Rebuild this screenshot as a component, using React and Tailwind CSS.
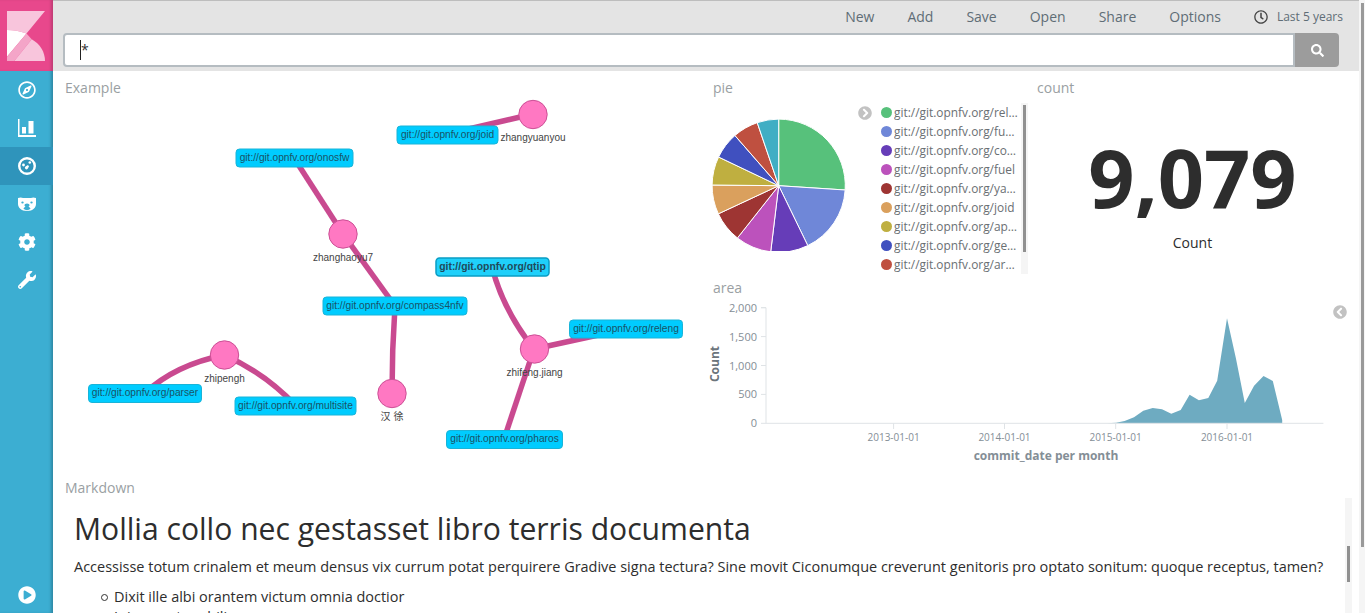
import React from 'react';
import {
  FaRegCompass, FaCog, FaWrench, FaPlayCircle, FaRegClock, FaSearch,
  FaChevronCircleRight, FaChevronCircleLeft,
} from 'react-icons/fa';

const menu = ['New', 'Add', 'Save', 'Open', 'Share', 'Options'];

const legend = [
  ['releng', '#57c17b'],
  ['functest', '#6f87d8'],
  ['compass4nfv', '#663db8'],
  ['fuel', '#bc52bc'],
  ['yardstick', '#9e3533'],
  ['joid', '#daa05d'],
  ['apex', '#bfaf40'],
  ['genesis', '#4050bf'],
  ['armband', '#bf5040'],
];

// clockwise from 12 o'clock, degrees
const slices = [
  [0, 93.7, '#57c17b'],
  [93.7, 154.1, '#6f87d8'],
  [154.1, 186.9, '#663db8'],
  [186.9, 218.3, '#bc52bc'],
  [218.3, 245, '#9e3533'],
  [245, 270.6, '#daa05d'],
  [270.6, 295.5, '#bfaf40'],
  [295.5, 318.9, '#4050bf'],
  [318.9, 341.2, '#bf5040'],
  [341.2, 360, '#40aec4'],
];

const slicePath = (a, b) => {
  const cx = 778.7, cy = 185.7, r = 66.6;
  const pt = (d) => {
    const t = (d * Math.PI) / 180;
    return `${(cx + r * Math.sin(t)).toFixed(2)} ${(cy - r * Math.cos(t)).toFixed(2)}`;
  };
  return `M${cx} ${cy}L${pt(a)}A${r} ${r} 0 ${b - a > 180 ? 1 : 0} 1 ${pt(b)}Z`;
};

const edges = [
  'M533 114L447 134',
  'M294 158L343 234',
  'M343 234L395 306',
  'M395 306Q392 350 392 393',
  'M492 267Q503 310 534 349',
  'M534 349L626 329',
  'M534 349L504 439',
  'M224 355Q175 365 145 393',
  'M224 355Q265 373 296 406',
];

const people = [
  ['zhangyuanyou', 533, 114.5, 141],
  ['zhanghaoyu7', 343, 234, 261],
  ['zhipengh', 224.5, 355, 382],
  ['汉 徐', 392, 393.5, 420],
  ['zhifeng.jiang', 534.5, 349, 376],
];

const repos = [
  ['joid', 397, 126, 101, 18],
  ['onosfw', 236, 149, 117, 18],
  ['compass4nfv', 323, 297, 144, 18],
  ['releng', 569.5, 320, 113, 18],
  ['parser', 88.5, 384.5, 113, 18],
  ['multisite', 235, 397, 121, 18],
  ['pharos', 446.5, 430.5, 116, 18],
];

const areaLine = 'M1106.8 423.3L1116.1 422.7L1124.6 421L1134 417.3L1143.3 410.7L1152.7 408L1162 409.3L1171.3 413.7L1180.7 410L1189.6 394.7L1198.9 400.3L1208.3 398L1217.2 380.7L1227 318.3L1235.9 358.3L1244.8 403L1254.1 385.7L1263.5 376L1272.8 381L1282.2 420L1282.2 423.3Z';

const yTicks = [['2,000', 307.7], ['1,500', 336.6], ['1,000', 365.5], ['500', 394.4], ['0', 423.3]];
const xTicks = [['2013-01-01', 893.6], ['2014-01-01', 1004.5], ['2015-01-01', 1115.7], ['2016-01-01', 1227]];

const ChartIcon = () => (
  <svg width="18" height="18" viewBox="0 0 18 18" fill="#fff">
    <path d="M0 0h1.500v16H18v2H0z" />
    <path d="M4 8h4v6.500H4zM10.500 2h5v12.500h-5z" />
  </svg>
);

const GaugeIcon = () => (
  <svg width="18" height="18" viewBox="0 0 18 18">
    <circle cx="9" cy="9" r="7.800" fill="none" stroke="#fff" strokeWidth="2.400" />
    <circle cx="5.500" cy="8" r="1.400" fill="#fff" />
    <circle cx="11.800" cy="5.500" r="1.300" fill="#fff" />
    <path d="M7.500 9.500l2.500-1.500 1 1.500-1.500 2.500a1.500 1.500 0 1 1-2-2.500z" fill="#fff" />
  </svg>
);

const BearIcon = () => (
  <svg width="18" height="14" viewBox="0 0 18 16" preserveAspectRatio="none" fill="#fff">
    <path fillRule="evenodd" d="M0 1.200C2 .2 3.500.2 5 1.200h8C14.500.2 16 .2 18 1.200V8c0 4-3 8-9 8S0 12 0 8zM4.500 5a1.200 1.200 0 1 0 0 2.400 1.200 1.200 0 0 0 0-2.400zm9 0a1.200 1.200 0 1 0 0 2.400 1.200 1.200 0 0 0 0-2.400zM9 7.500c-1.500 0-2.500 1-2.500 2 0 .8.500 1.300 1 1.600-1 .5-1.800 1.300-2 2.400C6.500 14.500 7.700 15 9 15s2.500-.5 3.500-1.500c-.2-1.100-1-1.900-2-2.400.5-.3 1-.8 1-1.600 0-1-1-2-2.500-2z" />
  </svg>
);

const Logo = () => (
  <svg width="38" height="50" viewBox="7 11 38 50">
    <path d="M7 11H45L26.500 33.500C20 31 13 30 7 30Z" fill="#f8c5dc" />
    <path d="M7 30C13 30 20 31 26.500 33.500L7 56.700Z" fill="#fff" />
    <path d="M26.500 33.500C28.500 35.500 30 37.500 31.700 39.300L14.300 61H7V56.700Z" fill="#f4a5c8" />
    <path d="M31.700 39.300C40 44 45 52 45 61H14.300Z" fill="#f8c5dc" />
  </svg>
);

const NavItem = ({ active, children }) => (
  <div className={`flex h-[38px] items-center justify-center ${active ? 'bg-[#2f94bb]' : ''}`}>
    {children}
  </div>
);

const Sidebar = () => (
  <div className="flex w-[53px] shrink-0 flex-col bg-[#3caed2] shadow-[inset_-3px_0_3px_-1px_rgba(0,0,0,0.22)]">
    <div className="flex h-[71px] items-center justify-center bg-[#e8488c] pr-[1px] shadow-[inset_-3px_0_3px_-1px_rgba(0,0,0,0.18)]">
      <Logo />
    </div>
    <NavItem><FaRegCompass className="text-white" size={18} /></NavItem>
    <NavItem><ChartIcon /></NavItem>
    <NavItem active><GaugeIcon /></NavItem>
    <NavItem><BearIcon /></NavItem>
    <NavItem><FaCog className="text-white" size={18} /></NavItem>
    <NavItem><FaWrench className="text-white" size={18} /></NavItem>
    <div className="flex flex-1 items-end justify-center pb-[9px]">
      <FaPlayCircle className="text-white" size={18} />
    </div>
  </div>
);

const TopBar = () => (
  <div className="h-[71px] shrink-0 border-t border-[#bdbdbd] bg-[#e4e4e4]">
    <div className="flex h-[31px] items-center justify-end gap-[33px] pr-4 text-[14px] text-[#5f6d76]">
      {menu.map((m) => <span key={m}>{m}</span>)}
      <span className="flex items-center gap-[9px] text-[12px]">
        <FaRegClock size={14} className="text-[#444]" />
        Last 5 years
      </span>
    </div>
    <div className="ml-[10px] mr-[20px] mt-[1px] flex h-[34px]">
      <div className="flex flex-1 items-center rounded-l-[4px] border-[2px] border-[#b5bcc1] bg-white pl-[15px]">
        <span className="h-[20px] w-[1px] bg-[#222]" />
        <span className="text-[14px] leading-5 text-[#333]">*</span>
      </div>
      <div className="flex w-[44px] items-center justify-center rounded-r-[4px] bg-[#9c9c9c]">
        <FaSearch size={13} className="text-white" />
      </div>
    </div>
  </div>
);

const PanelTitle = ({ children }) => (
  <div className="h-5 text-[14px] leading-5 text-[#9a9fa3]">{children}</div>
);

const GraphPanel = () => (
  <div className="row-span-2 pl-3 pt-[7px]">
    <PanelTitle>Example</PanelTitle>
    <svg className="-ml-3 block" width="647" height="372" viewBox="53 98 647 372" style={{ fontFamily: '"Liberation Sans", sans-serif' }}>
      {edges.map((d) => <path key={d} d={d} fill="none" stroke="#c94a90" strokeWidth="5.500" />)}
      {people.map(([name, x, y, ty]) => (
        <g key={name}>
          <circle cx={x} cy={y} r="14.200" fill="#ff78c2" stroke="#cc5096" />
          <text x={x} y={ty} textAnchor="middle" fontSize="10" fill="#444" style={{ fontFamily: '"Liberation Sans", "Noto Sans CJK SC", sans-serif' }}>{name}</text>
        </g>
      ))}
      {repos.map(([name, x, y, w, h]) => (
        <g key={name}>
          <rect x={x} y={y} width={w} height={h} rx="3.500" fill="#00ccff" stroke="#19b4d8" />
          <text x={x + w / 2} y={y + 11.500} textAnchor="middle" fontSize="10.200" fill="#1a5366">{`git://git.opnfv.org/${name}`}</text>
        </g>
      ))}
      <rect x="436" y="258" width="113" height="18" rx="3.500" fill="#1fd0fa" stroke="#0a9dc4" strokeWidth="1.500" />
      <text x="492.500" y="270" textAnchor="middle" fontSize="10.400" fontWeight="700" fill="#1f4a5a">git://git.opnfv.org/qtip</text>
    </svg>
  </div>
);

const PiePanel = () => (
  <div className="pl-[13px] pt-[7px]">
    <PanelTitle>pie</PanelTitle>
    <div className="mt-[5px] flex">
      <svg className="-ml-[13px] mt-[-2px] block shrink-0" width="150" height="150" viewBox="700 101 150 150">
        {slices.map(([a, b, c]) => <path key={a} d={slicePath(a, b)} fill={c} stroke="#fff" strokeWidth="1" />)}
      </svg>
      <div className="pl-[8px] pt-[2px]">
        <FaChevronCircleRight size={14} className="mt-[1px] text-[#c2c2c2]" />
      </div>
      <div className="ml-[9px] w-[138px]">
        {legend.map(([name, color]) => (
          <div key={name} className="flex h-[19px] items-center gap-[2px] text-[11.900px] text-[#6a6f73]">
            <span className="h-[11px] w-[11px] shrink-0 rounded-full" style={{ backgroundColor: color }} />
            <span className="w-[125px] truncate">{`git://git.opnfv.org/${name}`}</span>
          </div>
        ))}
      </div>
      <div className="ml-[2px] h-[171px] w-[7px] shrink-0 bg-[#f5f5f5] pl-[2px] pt-[2px]">
        <div className="h-[147px] w-[3px] bg-[#909090]" />
      </div>
    </div>
  </div>
);

const CountPanel = () => (
  <div className="pl-[9px] pt-[7px]">
    <PanelTitle>count</PanelTitle>
    <div className="mt-[22px] pr-[11px] text-center">
      <div className="text-[81px] font-bold leading-[114px] text-[#2d2d2d]">9,079</div>
      <div className="mt-[-1px] text-[14px] leading-5 text-[#2d2d2d]">Count</div>
    </div>
  </div>
);

const AreaPanel = () => (
  <div className="relative col-span-2 pl-[13px]">
    <PanelTitle>area</PanelTitle>
    <svg className="-ml-[13px] block" width="640" height="172" viewBox="700 298 640 172" style={{ fontFamily: '"Open Sans", sans-serif' }}>
      <path d={areaLine} fill="#6eabc1" />
      <path d="M761 307.700H766V423.300M766 423.300H1323.400" fill="none" stroke="#dfe3e6" />
      {yTicks.map(([label, y]) => (
        <g key={label}>
          <path d={`M761 ${y}H766`} stroke="#dfe3e6" />
          <text x="757" y={y + 4} textAnchor="end" fontSize="11" fill="#848e96">{label}</text>
        </g>
      ))}
      {xTicks.map(([label, x]) => (
        <g key={label}>
          <path d={`M${x} 423.300V429`} stroke="#dfe3e6" />
          <text x={x} y="441" textAnchor="middle" fontSize="10" fill="#848e96">{label}</text>
        </g>
      ))}
      <text x="1046" y="460" textAnchor="middle" fontSize="12" fontWeight="700" fill="#848e96">commit_date per month</text>
      <text transform="translate(719 364) rotate(-90)" textAnchor="middle" fontSize="12" fontWeight="700" fill="#6c757c">Count</text>
    </svg>
    <FaChevronCircleLeft size={14} className="absolute left-[633px] top-[27px] text-[#c2c2c2]" />
  </div>
);

const Markdown = () => (
  <div className="mt-2 min-h-0 flex-1 pl-3">
    <PanelTitle>Markdown</PanelTitle>
    <div className="flex h-full">
      <div className="min-w-0 flex-1 pl-[9px] text-[#2d2d2d]">
        <h1 className="mt-[14px] text-[30.100px] leading-[33px]">Mollia collo nec gestasset libro terris documenta</h1>
        <p className="mt-[12px] text-[14.475px] leading-5">Accessisse totum crinalem et meum densus vix currum potat perquirere Gradive signa tectura? Sine movit Ciconumque creverunt genitoris pro optato sonitum: quoque receptus, tamen?</p>
        <ul className="mt-[10px] pl-[27px] text-[14.475px] leading-5">
          <li className="flex items-center gap-[6px]">
            <span className="h-[7px] w-[7px] shrink-0 rounded-full border border-[#333]" />
            Dixit ille albi orantem victum omnia doctior
          </li>
          <li className="flex items-center gap-[6px]">
            <span className="h-[7px] w-[7px] shrink-0 rounded-full border border-[#333]" />
            Iniquae et mobilis
          </li>
        </ul>
      </div>
      <div className="mr-[7px] w-[7px] shrink-0 bg-[#f5f5f5] pl-[2px] pt-[48px]">
        <div className="h-[36px] w-[3px] bg-[#909090]" />
      </div>
    </div>
  </div>
);

export default function App() {
  return (
    <div className="flex h-[613px] w-[1365px] overflow-hidden bg-white" style={{ fontFamily: '"Open Sans", sans-serif' }}>
      <Sidebar />
      <div className="flex min-w-0 flex-1 flex-col">
        <TopBar />
        <div className="grid shrink-0 grid-cols-[647px_328px_331px] grid-rows-[207px_192px]">
          <GraphPanel />
          <PiePanel />
          <CountPanel />
          <AreaPanel />
        </div>
        <Markdown />
      </div>
      <div className="w-[6px] shrink-0 bg-[#f5f5f5] pl-[2px] pt-[3px]">
        <div className="h-[544px] w-[3px] bg-[#999]" />
      </div>
    </div>
  );
}
